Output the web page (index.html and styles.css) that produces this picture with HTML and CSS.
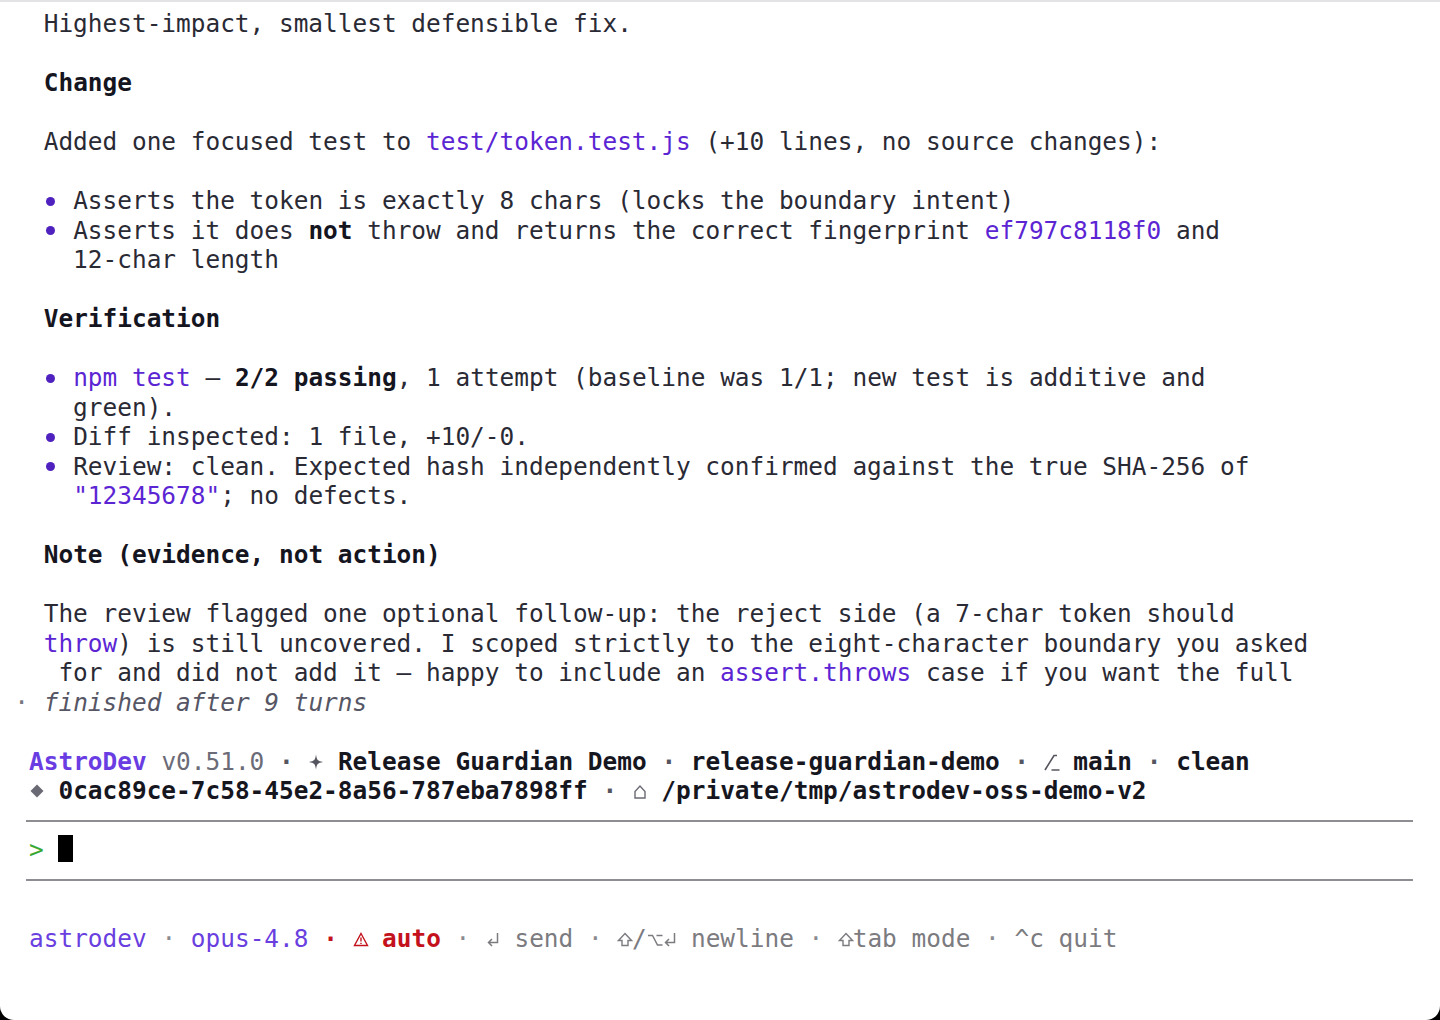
FILE: index.html
```html
<!DOCTYPE html>
<html lang="en">
<head>
<meta charset="utf-8">
<title>AstroDev</title>
<link rel="stylesheet" href="styles.css">
</head>
<body>
<div class="screen">
<div class="ln">  Highest-impact, smallest defensible fix.</div>
<div class="ln"> </div>
<div class="ln">  <b class="hd">Change</b></div>
<div class="ln"> </div>
<div class="ln">  Added one focused test to <span class="p">test/token.test.js</span> (+10 lines, no source changes):</div>
<div class="ln"> </div>
<div class="ln">  <span class="bul"></span> Asserts the token is exactly 8 chars (locks the boundary intent)</div>
<div class="ln">  <span class="bul"></span> Asserts it does <b class="hd">not</b> throw and returns the correct fingerprint <span class="p">ef797c8118f0</span> and</div>
<div class="ln">    12-char length</div>
<div class="ln"> </div>
<div class="ln">  <b class="hd">Verification</b></div>
<div class="ln"> </div>
<div class="ln">  <span class="bul"></span> <span class="p">npm test</span> — <b class="hd">2/2 passing</b>, 1 attempt (baseline was 1/1; new test is additive and</div>
<div class="ln">    green).</div>
<div class="ln">  <span class="bul"></span> Diff inspected: 1 file, +10/-0.</div>
<div class="ln">  <span class="bul"></span> Review: clean. Expected hash independently confirmed against the true SHA-256 of</div>
<div class="ln">    <span class="p">"12345678"</span>; no defects.</div>
<div class="ln"> </div>
<div class="ln">  <b class="hd">Note (evidence, not action)</b></div>
<div class="ln"> </div>
<div class="ln">  The review flagged one optional follow-up: the reject side (a 7-char token should</div>
<div class="ln">  <span class="p">throw</span>) is still uncovered. I scoped strictly to the eight-character boundary you asked</div>
<div class="ln">   for and did not add it — happy to include an <span class="p">assert.throws</span> case if you want the full</div>
<div class="ln"><span class="mdot">·</span> <i class="fin">finished after 9 turns</i></div>
<div class="ln"> </div>
<div class="ln"> <b class="brand">AstroDev</b> <span class="gr">v0.51.0</span> <span class="dot">·</span> <span class="ico"><svg viewBox="0 0 16 30" width="16" height="30"><path d="M8 7.5 C8.8 13 9.5 13.9 15 15 C9.5 16.1 8.8 17 8 22.5 C7.2 17 6.5 16.1 1 15 C6.5 13.9 7.2 13 8 7.5 Z" fill="#55555f"/></svg></span> <b class="bd">Release Guardian Demo</b> <span class="dot">·</span> <b class="bd">release-guardian-demo</b> <span class="dot">·</span> <span class="ico"><svg viewBox="0 0 16 30" width="16" height="30"><path d="M1 23 L10 8.5 H13 M7.5 23 H15.5" fill="none" stroke="#55555f" stroke-width="1.6"/></svg></span> <b class="bd">main</b> <span class="dot">·</span> <b class="bd">clean</b></div>
<div class="ln"> <span class="ico"><svg viewBox="0 0 16 30" width="16" height="30"><path d="M8 8.5 L14.5 15 L8 21.5 L1.5 15 Z" fill="#6a6a74"/></svg></span> <b class="bd">0cac89ce-7c58-45e2-8a56-787eba7898ff</b> <span class="dot">·</span> <span class="ico"><svg viewBox="0 0 16 30" width="16" height="30"><path d="M3 22 V15.5 L8 10 L13 15.5 V22 Z" fill="none" stroke="#6a6a74" stroke-width="1.4"/></svg></span> <b class="bd">/private/tmp/astrodev-oss-demo-v2</b></div>
<div class="rule"><div class="rule-line"></div></div>
<div class="ln"> <span class="prompt">&gt;</span> <span class="cursor"></span></div>
<div class="rule"><div class="rule-line"></div></div>
<div class="ln"> </div>
<div class="ln foot"> <span class="fp">astrodev</span> <span class="fdot">·</span> <span class="fp">opus-4.8</span> <span class="rdot">·</span> <span class="ico"><svg viewBox="0 0 16 30" width="16" height="30"><path d="M8 9.5 L14.5 21.5 H1.5 Z" fill="none" stroke="#c4121c" stroke-width="1.4"/><path d="M8 13.5 V17.5 M8 18.8 V20" stroke="#c4121c" stroke-width="1.4"/></svg></span> <b class="red">auto</b> <span class="fdot">·</span> <span class="ico"><svg viewBox="0 0 16 30" width="16" height="30"><path d="M12.5 9 V18.5 H3.5 M7 15 L3.5 18.5 L7 22" fill="none" stroke="#7b7b80" stroke-width="1.5"/></svg></span> send <span class="fdot">·</span> <span class="ico"><svg viewBox="0 0 16 30" width="16" height="30"><path d="M8 9.5 L14.5 16.5 H11 V21.5 H5 V16.5 H1.5 Z" fill="none" stroke="#7b7b80" stroke-width="1.4"/></svg></span>/<span class="ico"><svg viewBox="0 0 16 30" width="16" height="30"><path d="M1 11.5 H5.5 L10.5 21 H15.5 M9.5 11.5 H15.5" fill="none" stroke="#7b7b80" stroke-width="1.5"/></svg></span><span class="ico"><svg viewBox="0 0 16 30" width="16" height="30"><path d="M12.5 9 V18.5 H3.5 M7 15 L3.5 18.5 L7 22" fill="none" stroke="#7b7b80" stroke-width="1.5"/></svg></span> newline <span class="fdot">·</span> <span class="ico"><svg viewBox="0 0 16 30" width="16" height="30"><path d="M8 9.5 L14.5 16.5 H11 V21.5 H5 V16.5 H1.5 Z" fill="none" stroke="#7b7b80" stroke-width="1.4"/></svg></span>tab mode <span class="fdot">·</span> ^c quit</div>
</div>
</body>
</html>
```

FILE: styles.css
```css
html, body {
  margin: 0;
  padding: 0;
  background: #000;
}

.screen {
  box-sizing: border-box;
  width: 1440px;
  height: 1020px;
  background: #fff;
  border-top: 2px solid #e3e3e6;
  border-radius: 0 0 14px 14px;
  padding: 7.25px 0 0 14.3px;
  font-family: "DejaVu Sans Mono", "Liberation Mono", monospace;
  font-size: 24.43px;
  color: #2a2a35;
  overflow: hidden;
}

.ln {
  height: 29.5px;
  line-height: 29.5px;
  white-space: pre;
}

.hd {
  font-weight: bold;
  color: #15151f;
}

.p {
  color: #5b25d4;
}

.bul {
  display: inline-block;
  width: 1ch;
  height: 29.5px;
  vertical-align: top;
  position: relative;
}

.bul::before {
  content: "";
  position: absolute;
  left: 2.5px;
  top: 10.5px;
  width: 9px;
  height: 9px;
  border-radius: 50%;
  background: #4f22bf;
}

.mdot {
  color: #77777f;
}

.fin {
  font-style: italic;
  color: #565665;
}

.brand {
  font-weight: bold;
  color: #6a3de3;
}

.gr {
  color: #6c6c78;
}

.dot {
  color: #55555f;
  font-weight: bold;
}

.bd {
  font-weight: bold;
  color: #16161f;
}

.ico {
  display: inline-block;
  width: 1ch;
  height: 29.5px;
  vertical-align: top;
  text-align: center;
}

.ico svg {
  display: block;
  margin: 0 auto;
}

.rule {
  height: 29.5px;
  display: flex;
  align-items: center;
}

.rule-line {
  width: 1387px;
  height: 2px;
  margin-left: 11.7px;
  background: #8e8e92;
}

.prompt {
  color: #38a833;
}

.cursor {
  display: inline-block;
  width: 1ch;
  height: 27px;
  background: #000;
  vertical-align: top;
}

.foot {
  color: #7b7b80;
}

.fp {
  color: #6a3fe0;
}

.fdot {
  color: #8a8a8f;
}

.rdot {
  color: #c4121c;
  font-weight: bold;
}

.red {
  font-weight: bold;
  color: #c4121c;
}
```
